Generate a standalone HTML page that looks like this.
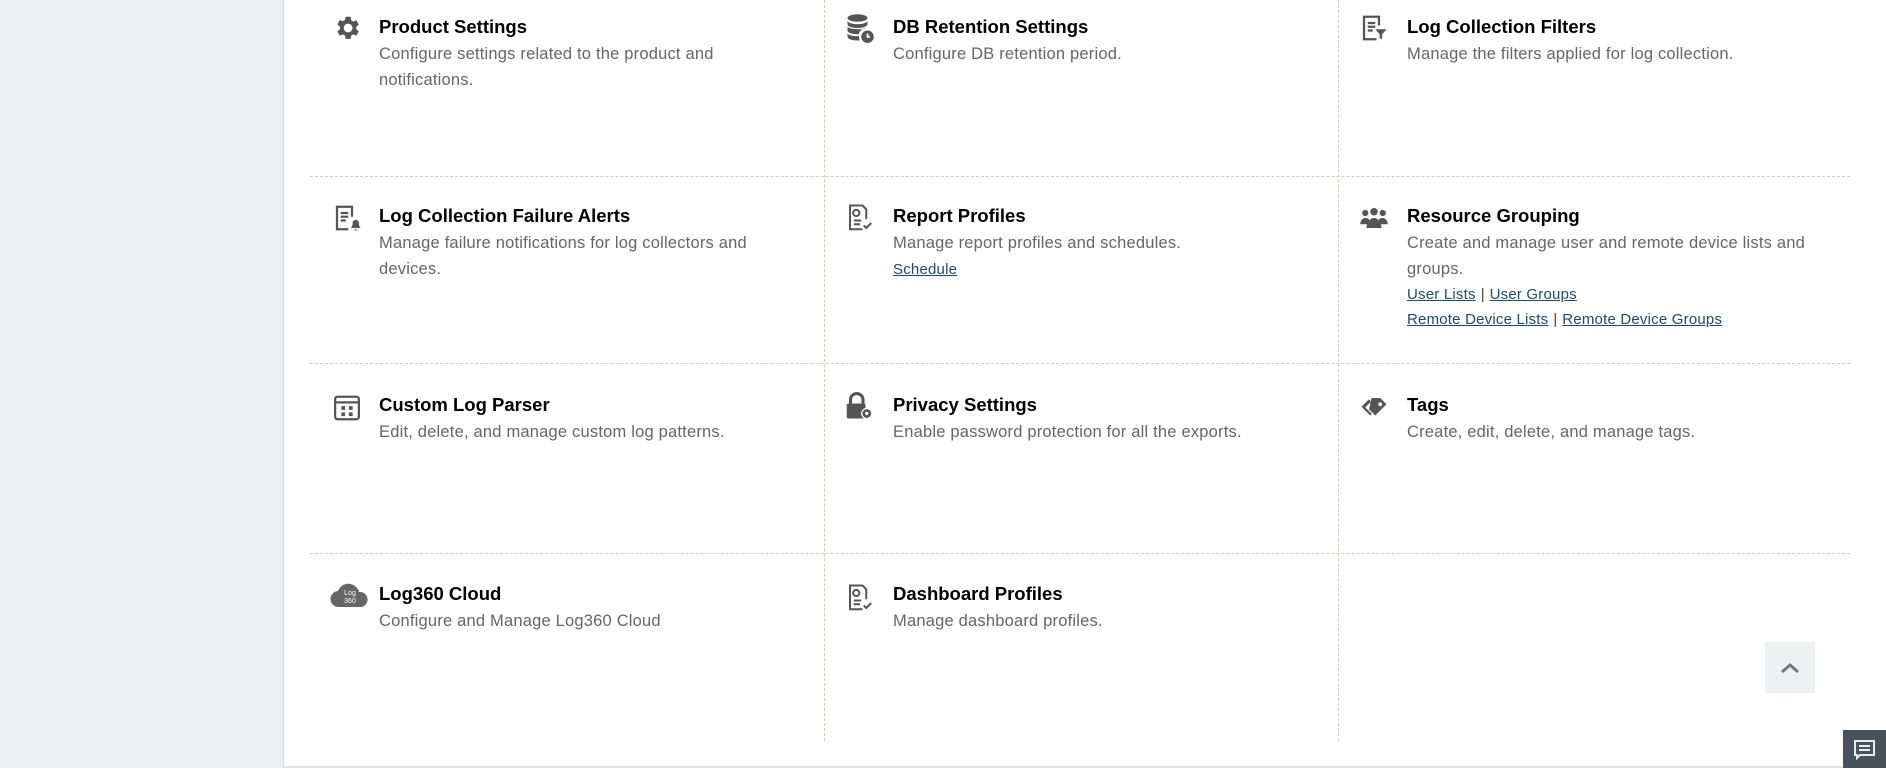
<!DOCTYPE html>
<html><head><meta charset="utf-8"><style>
*{margin:0;padding:0;box-sizing:border-box}
body{width:1886px;height:768px;position:relative;overflow:hidden;background:#fff;font-family:"Liberation Sans",sans-serif}
.side{position:absolute;left:0;top:0;width:284px;height:768px;background:#eeeff1;border-right:1px solid #dcdde0}
.bottom{position:absolute;left:284px;top:766px;width:1602px;height:2px;background:#e3e3e3}
.hl{position:absolute;left:310px;width:1540px;border-top:1px dashed #d0cdb8;height:0}
.vl{position:absolute;top:0;height:741px;border-left:1px dashed #d0cdb8;width:0}
.cell{position:absolute;width:440px}
.cell h3{font-size:18.5px;font-weight:bold;color:#000;line-height:24px;margin-bottom:3px}
.cell p{font-size:16.5px;color:#666;line-height:25.5px;letter-spacing:0.2px}
.cell a{font-size:15px;color:#1d4a73;text-decoration:underline;line-height:25px;letter-spacing:0.2px}
.cell .sep{color:#444;font-size:15px;padding:0 5px}
.ic{position:absolute;width:30px;height:30px}
.top{position:absolute;left:1765px;top:642px;width:50px;height:51px;background:#eef0f1}
.chat{position:absolute;left:1843px;top:730px;width:43px;height:38px;background:#46525c}
</style></head><body>
<div class="side"></div>
<div class="bottom"></div>
<div class="vl" style="left:824px"></div>
<div class="vl" style="left:1338px"></div>
<div class="hl" style="top:176px"></div>
<div class="hl" style="top:363px"></div>
<div class="hl" style="top:553px"></div>

<svg class="ic" style="left:332px;top:13px" viewBox="0 0 24 24"><path fill="#555" d="M19.4 13a7.5 7.5 0 0 0 0-2l2.1-1.6-2-3.5-2.5 1a7.6 7.6 0 0 0-1.7-1L14.9 3h-4l-.4 2.6a7.6 7.6 0 0 0-1.7 1l-2.5-1-2 3.5L6.4 11a7.5 7.5 0 0 0 0 2l-2.1 1.6 2 3.5 2.5-1a7.6 7.6 0 0 0 1.7 1l.4 2.6h4l.4-2.6a7.6 7.6 0 0 0 1.7-1l2.5 1 2-3.5zM12.9 15.5a3.5 3.5 0 1 1 0-7 3.5 3.5 0 0 1 0 7z"/></svg>
<svg class="ic" style="left:845px;top:13px" viewBox="0 0 24 24"><g fill="#555"><ellipse cx="10" cy="4" rx="8" ry="3"/><path d="M2 6v3c0 1.7 3.6 3 8 3s8-1.3 8-3V6c0 1.7-3.6 3-8 3S2 7.7 2 6z"/><path d="M2 11v3c0 1.7 3.6 3 8 3h1a6 6 0 0 1 6-5c-1.4.6-4 1-7 1-4.4 0-8-1.3-8-2z"/><path d="M2 16v3c0 1.7 3.6 3 8 3h2a6 6 0 0 1-1-3.5c-5 .3-9-1-9-2.5z"/><circle cx="18" cy="19" r="5"/></g><path d="M18 16.5V19h2" stroke="#fff" stroke-width="1.5" fill="none"/></svg>
<svg class="ic" style="left:1359px;top:13px" viewBox="0 0 24 24"><g fill="none" stroke="#555" stroke-width="1.8"><path d="M14 21H4V3h12v7"/><path d="M7 8h6M7 11h6M7 14h4"/></g><path fill="#555" d="M13 13h9l-3.5 4v4l-2-1v-3z"/></svg>
<svg class="ic" style="left:332px;top:203px" viewBox="0 0 24 24"><g fill="none" stroke="#555" stroke-width="1.8"><path d="M13 21H4V3h12v8"/><path d="M7 8h6M7 11h6M7 14h4"/></g><path fill="#555" d="M15 20h8c-1-1-1.5-2-1.5-4a2.5 2.5 0 0 0-5 0c0 2-.5 3-1.5 4zM18 21h2a1 1 0 0 1-2 0z"/></svg>
<svg class="ic" style="left:845px;top:203px" viewBox="0 0 24 24"><g fill="none" stroke="#555" stroke-width="1.6"><path d="M14 21H4V2h10l3 3v8"/><circle cx="9" cy="8" r="2.5"/><path d="M7 14h6M7 17h5"/><path d="M15 18l2 2 4-4"/></g></svg>
<svg class="ic" style="left:1359px;top:203px" viewBox="0 0 24 24"><g fill="#555"><circle cx="5" cy="8" r="2.5"/><circle cx="19" cy="8" r="2.5"/><circle cx="12" cy="7" r="3"/><path d="M1 17c0-3 2-5 4-5s3 1 3 1v4zM23 17c0-3-2-5-4-5s-3 1-3 1v4z"/><path d="M6 20c0-4 2.5-8 6-8s6 4 6 8z"/></g></svg>
<svg class="ic" style="left:332px;top:393px" viewBox="0 0 24 24"><rect x="2.5" y="3" width="19" height="18" rx="2" fill="none" stroke="#555" stroke-width="1.8"/><path d="M2.5 7.5h19" stroke="#555" stroke-width="1.8"/><g fill="#555"><rect x="7.5" y="10.5" width="3" height="3"/><rect x="13.5" y="10.5" width="3" height="3"/><rect x="7.5" y="15.5" width="3" height="3"/><rect x="13.5" y="15.5" width="3" height="3"/></g></svg>
<svg class="ic" style="left:843px;top:391px" viewBox="0 0 24 24"><path fill="none" stroke="#555" stroke-width="2.5" d="M6 11V7a5 5 0 0 1 10 0v4"/><rect x="3" y="10" width="15" height="12" rx="1.5" fill="#555"/><circle cx="19" cy="18" r="4" fill="#555" stroke="#fff" stroke-width="1"/><circle cx="19" cy="18" r="1.3" fill="#fff"/></svg>
<svg class="ic" style="left:1359px;top:393px" viewBox="0 0 24 24"><path fill="#555" d="M10 4h7l5 5-9 9-5-5z"/><path fill="#555" d="M8 5L2 11l7 7 1.3-1.3L5 11.5 9.5 7z"/><circle cx="17" cy="9" r="1.5" fill="#fff"/></svg>
<svg style="position:absolute;left:330px;top:581px;width:40px;height:28px" viewBox="0 0 40 28"><path fill="#666" d="M9 26a8 8 0 0 1-1-16 11 11 0 0 1 21 1 7.5 7.5 0 0 1 2 15z"/><text x="20" y="14" font-size="7" fill="#fff" text-anchor="middle" font-family="Liberation Sans">Log</text><text x="20" y="22" font-size="7" fill="#fff" text-anchor="middle" font-family="Liberation Sans">360</text></svg>
<svg class="ic" style="left:845px;top:583px" viewBox="0 0 24 24"><g fill="none" stroke="#555" stroke-width="1.6"><path d="M14 21H4V2h10l3 3v8"/><circle cx="9" cy="8" r="2.5"/><path d="M7 14h6M7 17h5"/><path d="M15 18l2 2 4-4"/></g></svg>

<div class="cell" style="left:379px;top:15px"><h3>Product Settings</h3><p>Configure settings related to the product and<br>notifications.</p></div>
<div class="cell" style="left:893px;top:15px"><h3>DB Retention Settings</h3><p>Configure DB retention period.</p></div>
<div class="cell" style="left:1407px;top:15px"><h3>Log Collection Filters</h3><p>Manage the filters applied for log collection.</p></div>

<div class="cell" style="left:379px;top:204px"><h3>Log Collection Failure Alerts</h3><p>Manage failure notifications for log collectors and<br>devices.</p></div>
<div class="cell" style="left:893px;top:204px"><h3>Report Profiles</h3><p>Manage report profiles and schedules.</p><a>Schedule</a></div>
<div class="cell" style="left:1407px;top:204px"><h3>Resource Grouping</h3><p>Create and manage user and remote device lists and<br>groups.</p><div><a>User Lists</a><span class="sep">|</span><a>User Groups</a></div><div><a>Remote Device Lists</a><span class="sep">|</span><a>Remote Device Groups</a></div></div>

<div class="cell" style="left:379px;top:393px"><h3>Custom Log Parser</h3><p>Edit, delete, and manage custom log patterns.</p></div>
<div class="cell" style="left:893px;top:393px"><h3>Privacy Settings</h3><p>Enable password protection for all the exports.</p></div>
<div class="cell" style="left:1407px;top:393px"><h3>Tags</h3><p>Create, edit, delete, and manage tags.</p></div>

<div class="cell" style="left:379px;top:582px"><h3>Log360 Cloud</h3><p>Configure and Manage Log360 Cloud</p></div>
<div class="cell" style="left:893px;top:582px"><h3>Dashboard Profiles</h3><p>Manage dashboard profiles.</p></div>

<div class="top"><svg width="50" height="51" viewBox="0 0 50 51"><path d="M17 30l8-7 8 7" fill="none" stroke="#777" stroke-width="3"/></svg></div>
<div class="chat"><svg width="43" height="38" viewBox="0 0 43 38"><path d="M12 11h19v14H17l-3 3v-3h-2z" fill="none" stroke="#e8ecef" stroke-width="2"/><path d="M16 16h11M16 20h11" stroke="#e8ecef" stroke-width="2"/></svg></div>
</body></html>
